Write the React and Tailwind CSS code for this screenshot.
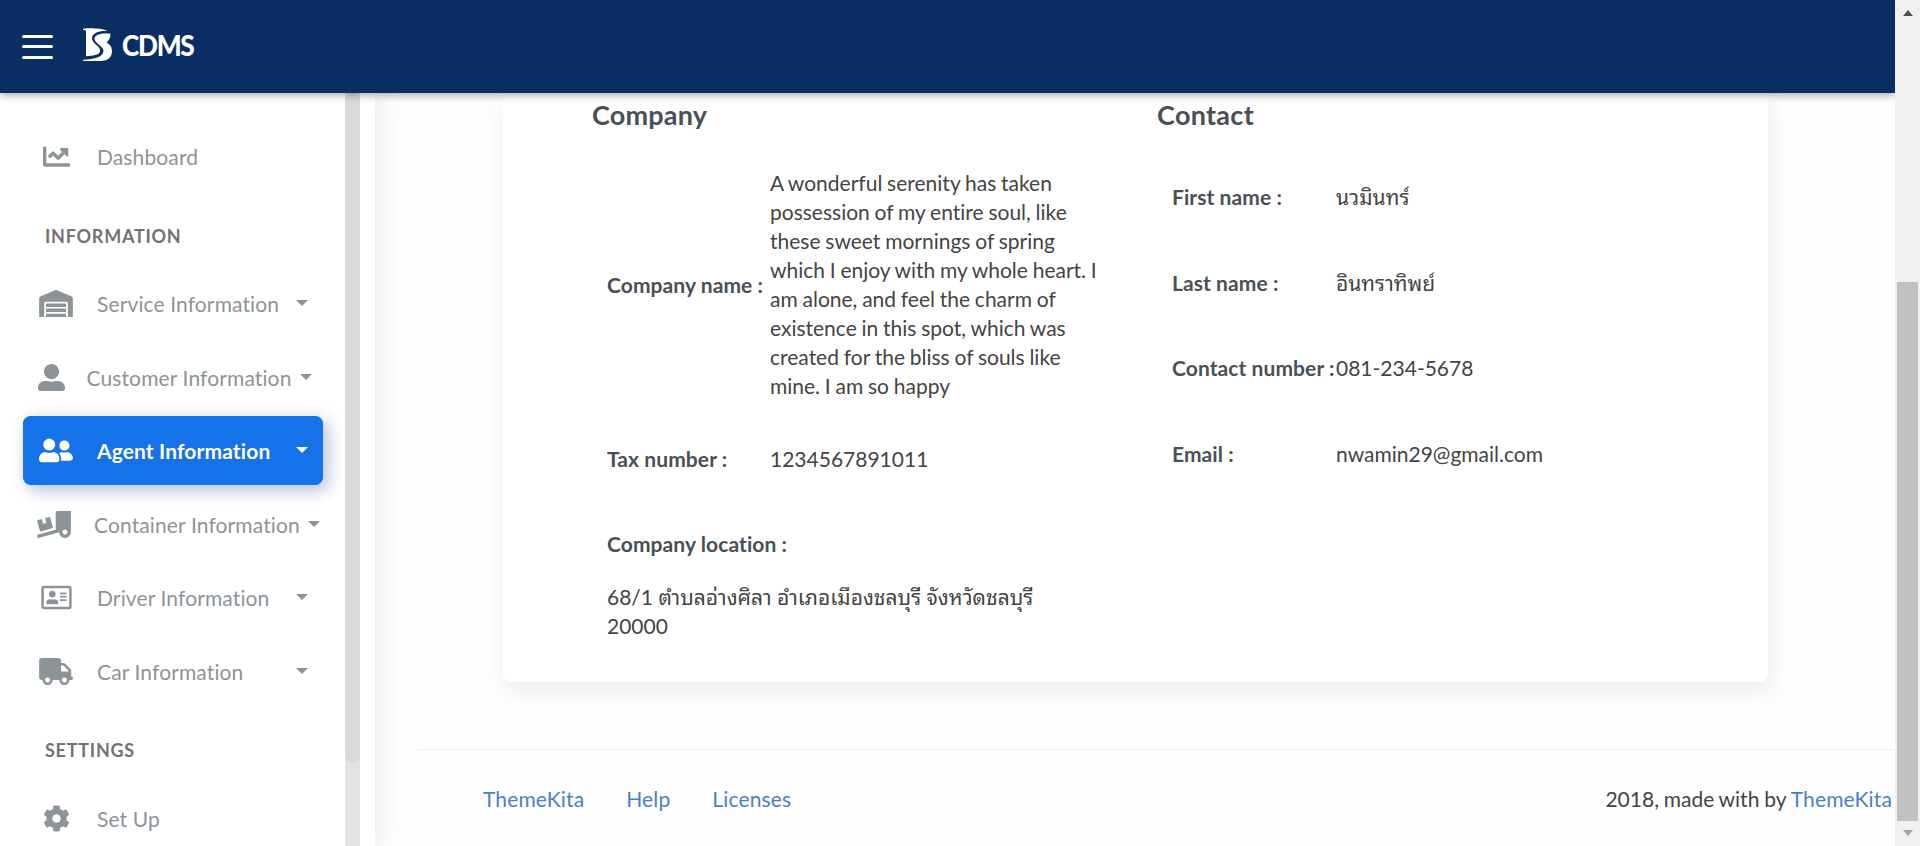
import React from "react";
import {
  FaChartLine,
  FaWarehouse,
  FaUserAlt,
  FaUserFriends,
  FaTruckLoading,
  FaRegAddressCard,
  FaTruck,
  FaCog,
} from "react-icons/fa";

function Caret() {
  return (
    <span className="h-0 w-0 border-x-[6.3px] border-t-[6.3px] border-x-transparent border-t-current" />
  );
}

function NavItem({ icon: Icon, iconClass, pad = "pl-[16px]", gap = "ml-[24px]", label, caret, active }) {
  return (
    <li
      className={
        "mt-[4.5px] flex h-[69px] w-[300px] shrink-0 items-center whitespace-nowrap rounded-[7.5px] tracking-[0.12px] " +
        pad +
        (active
          ? " bg-[#1572e8] font-bold text-white shadow-[6px_2px_22px_0_rgba(18,38,63,0.1),4px_6px_15px_0_rgba(21,70,160,0.24)]"
          : " text-[#8d9498]")
      }
    >
      <span className="flex w-[34px] shrink-0 justify-center">
        <Icon className={"h-[27px] " + (iconClass || "w-[34px]")} />
      </span>
      <span className={gap}>{label}</span>
      {caret && (
        <span className={"flex pb-[1px] " + caret}>
          <Caret />
        </span>
      )}
    </li>
  );
}

function NavSection({ children }) {
  return (
    <li className="flex h-[73.5px] shrink-0 items-center pl-[22px] pt-[17px] text-[18px] font-bold tracking-[0.75px] text-[#727275]">
      {children}
    </li>
  );
}

function Logo() {
  return (
    <svg viewBox="0 0 30 34" className="h-[34px] w-[30px]" fill="#fff">
      <path d="M0 0.8C8 0 18 0 25 3.2C16 2.6 9.500 5 9 10C8.500 16 18.500 18 17 23.500C16 27 10 28 3 28.200V3.500C3 2.200 1.500 1.800 0 1.700Z" />
      <path d="M27.500 5.800C27.500 9.500 26.500 12 23.500 14.500C27.500 16.500 29 19.500 29 23C29 29.500 24.500 33 18 33H0.300V31.800C9 31.200 20 30 20.500 23C20.700 18 11 15.500 11.500 10.500C12 6.500 18 5 27.500 5.800Z" />
    </svg>
  );
}

function Row({ label, height, children, labelWidth }) {
  return (
    <div className={"flex items-center " + height}>
      <div className={"shrink-0 whitespace-nowrap font-bold tracking-[0.08px] text-[#495057] " + labelWidth}>{label}</div>
      <div>{children}</div>
    </div>
  );
}

export default function App() {
  return (
    <div className="flex h-[846px] w-[1920px] overflow-hidden bg-white font-['Lato','Noto_Sans_Thai_Looped','Loma','Waree','Garuda','Noto_Sans_Thai',sans-serif] text-[21px] leading-[29px] text-[#444] [font-variant-ligatures:none]">
      <div className="flex w-[1895px] flex-col overflow-hidden">
        <header className="z-20 flex h-[93px] shrink-0 items-center bg-[#0b2e62] shadow-[0_2px_8px_rgba(0,0,0,0.35)]">
          <div className="ml-[22px] flex w-[31px] flex-col gap-[7.500px]">
            <span className="h-[3px] rounded-full bg-white" />
            <span className="h-[3px] rounded-full bg-white" />
            <span className="h-[3px] rounded-full bg-white" />
          </div>
          <div className="ml-[30px] flex items-center pb-[4px]">
            <Logo />
            <span className="ml-[9px] origin-left scale-x-[0.92] text-[28.500px] font-black leading-[34px] tracking-[-1.400px] text-white">
              CDMS
            </span>
          </div>
        </header>

        <div className="flex min-h-0 flex-1">
          <aside className="z-10 flex w-[375px] shrink-0 bg-white shadow-[6px_1px_20px_rgba(69,65,78,0.1)]">
            <ul className="flex w-[345px] flex-col overflow-hidden pl-[23px] pt-[24.5px]">
              <NavItem icon={FaChartLine} iconClass="w-[27px]" label="Dashboard" />
              <NavSection>INFORMATION</NavSection>
              <NavItem icon={FaWarehouse} label="Service Information" caret="ml-auto mr-[15px]" />
              <NavItem icon={FaUserAlt} iconClass="w-[27px]" pad="pl-[11px]" gap="ml-[18.500px]" label="Customer Information" caret="ml-[8px]" />
              <NavItem icon={FaUserFriends} label="Agent Information" caret="ml-auto mr-[15px]" active />
              <NavItem icon={FaTruckLoading} pad="pl-[14px]" gap="ml-[23px]" label="Container Information" caret="ml-[8px]" />
              <NavItem icon={FaRegAddressCard} iconClass="w-[31px]" label="Driver Information" caret="ml-auto mr-[15px]" />
              <NavItem icon={FaTruck} label="Car Information" caret="ml-auto mr-[15px]" />
              <NavSection>SETTINGS</NavSection>
              <NavItem icon={FaCog} iconClass="w-[27px]" label="Set Up" />
            </ul>
            <div className="w-[15px] bg-[#e3e3e3]">
              <div className="h-[670px] rounded-full bg-[#dadada]" />
            </div>
          </aside>

          <main className="flex min-w-0 flex-1 flex-col bg-[#fefefe]">
            <section className="ml-[128px] flex h-[589px] w-[1265px] shrink-0 rounded-b-[7.500px] bg-white pl-[89px] pt-[3px] shadow-[3px_9px_24px_0_rgba(0,0,0,0.08)]">
              <div className="w-[565px]">
                <h2 className="text-[27px] font-bold leading-[38px] tracking-[0.2px] text-[#495057]">Company</h2>
                <div className="w-[506px] pl-[15px] pt-[16px]">
                  <Row label="Company name :" labelWidth="w-[163px]" height="h-[268px]">
                    <p className="[word-spacing:-0.6px]">
                      A wonderful serenity has taken possession of my entire soul, like these sweet mornings of
                      spring which I enjoy with my whole heart. I am alone, and feel the charm of existence in this
                      spot, which was created for the bliss of souls like mine. I am so happy
                    </p>
                  </Row>
                  <Row label="Tax number :" labelWidth="w-[163px]" height="h-[80px]">1234567891011</Row>
                  <Row label="Company location :" labelWidth="w-[163px]" height="h-[90px]" />
                  <p className="-mt-[6px] w-[470px]">68/1 ตำบลอ่างศิลา อำเภอเมืองชลบุรี จังหวัดชลบุรี 20000</p>
                </div>
              </div>
              <div>
                <h2 className="text-[27px] font-bold leading-[38px] tracking-[0.3px] text-[#495057]">Contact</h2>
                <div className="pl-[15px] pt-[20px]">
                  <Row label="First name :" labelWidth="w-[164px]" height="h-[85.6px]">นวมินทร์</Row>
                  <Row label="Last name :" labelWidth="w-[164px]" height="h-[85.6px]">อินทราทิพย์</Row>
                  <Row label="Contact number :" labelWidth="w-[164px]" height="h-[85.6px]">081-234-5678</Row>
                  <Row label="Email :" labelWidth="w-[164px]" height="h-[85.6px]">nwamin29@gmail.com</Row>
                </div>
              </div>
            </section>

            <footer className="ml-[42px] mt-[67px] flex h-[97px] shrink-0 items-center justify-between border-t border-[#eee] pl-[66px] pr-[3px]">
              <nav className="flex gap-[42px] tracking-[0.14px] text-[#4683c4]">
                <a>ThemeKita</a>
                <a>Help</a>
                <a>Licenses</a>
              </nav>
              <div className="[word-spacing:-0.6px]">
                2018, made with by <a className="tracking-[0.14px] text-[#4683c4]">ThemeKita</a>
              </div>
            </footer>
          </main>
        </div>
      </div>

      <div className="flex w-[25px] flex-col items-center bg-[#f0f0f0]">
        <span className="mt-[10px] h-0 w-0 border-x-[5.500px] border-b-[6px] border-x-transparent border-b-[#505050]" />
        <div className="mt-[266px] h-[539px] w-[21px] bg-[#c1c1c1]" />
        <span className="mt-[9px] h-0 w-0 border-x-[5.500px] border-t-[6px] border-x-transparent border-t-[#a3a3a3]" />
      </div>
    </div>
  );
}
